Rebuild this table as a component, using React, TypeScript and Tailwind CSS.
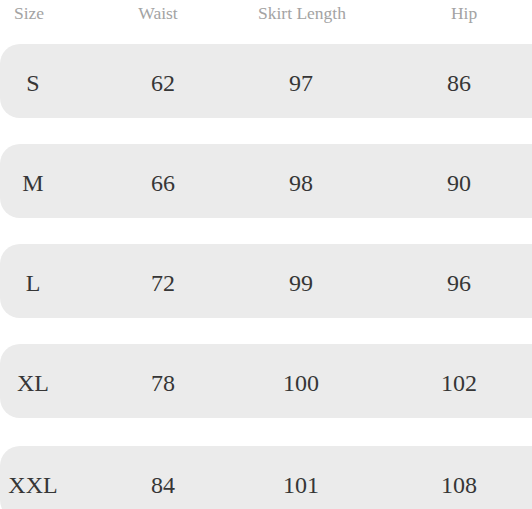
import React from "react";

const rows = [
  ["S", "62", "97", "86"],
  ["M", "66", "98", "90"],
  ["L", "72", "99", "96"],
  ["XL", "78", "100", "102"],
  ["XXL", "84", "101", "108"],
];

export default function App() {
  return (
    <div
      className="w-[532px] h-[509px] overflow-hidden bg-white"
      style={{ fontFamily: '"Liberation Serif", serif' }}
    >
      <div className="w-[600px] grid grid-cols-[58px_200px_82px_248px] h-[25px] items-center text-[17.5px] text-[#a3a3a3]">
        <div className="text-center">Size</div>
        <div className="text-center">Waist</div>
        <div className="text-center whitespace-nowrap">Skirt Length</div>
        <div className="text-center">Hip</div>
      </div>
      <div className="mt-[19px] flex flex-col gap-[26px]">
        {rows.map((r, idx) => (
          <div
            key={r[0]}
            className={
              "w-[600px] h-[74px] rounded-l-[20px] bg-[#ebebeb] grid grid-cols-[66px_194px_82px_234px] items-center text-[24px] text-[#363636] pt-[4px]" +
              (idx === 4 ? " mt-[2px]" : "")
            }
          >
            {r.map((c, i) => (
              <div key={i} className="text-center">
                {c}
              </div>
            ))}
          </div>
        ))}
      </div>
    </div>
  );
}
